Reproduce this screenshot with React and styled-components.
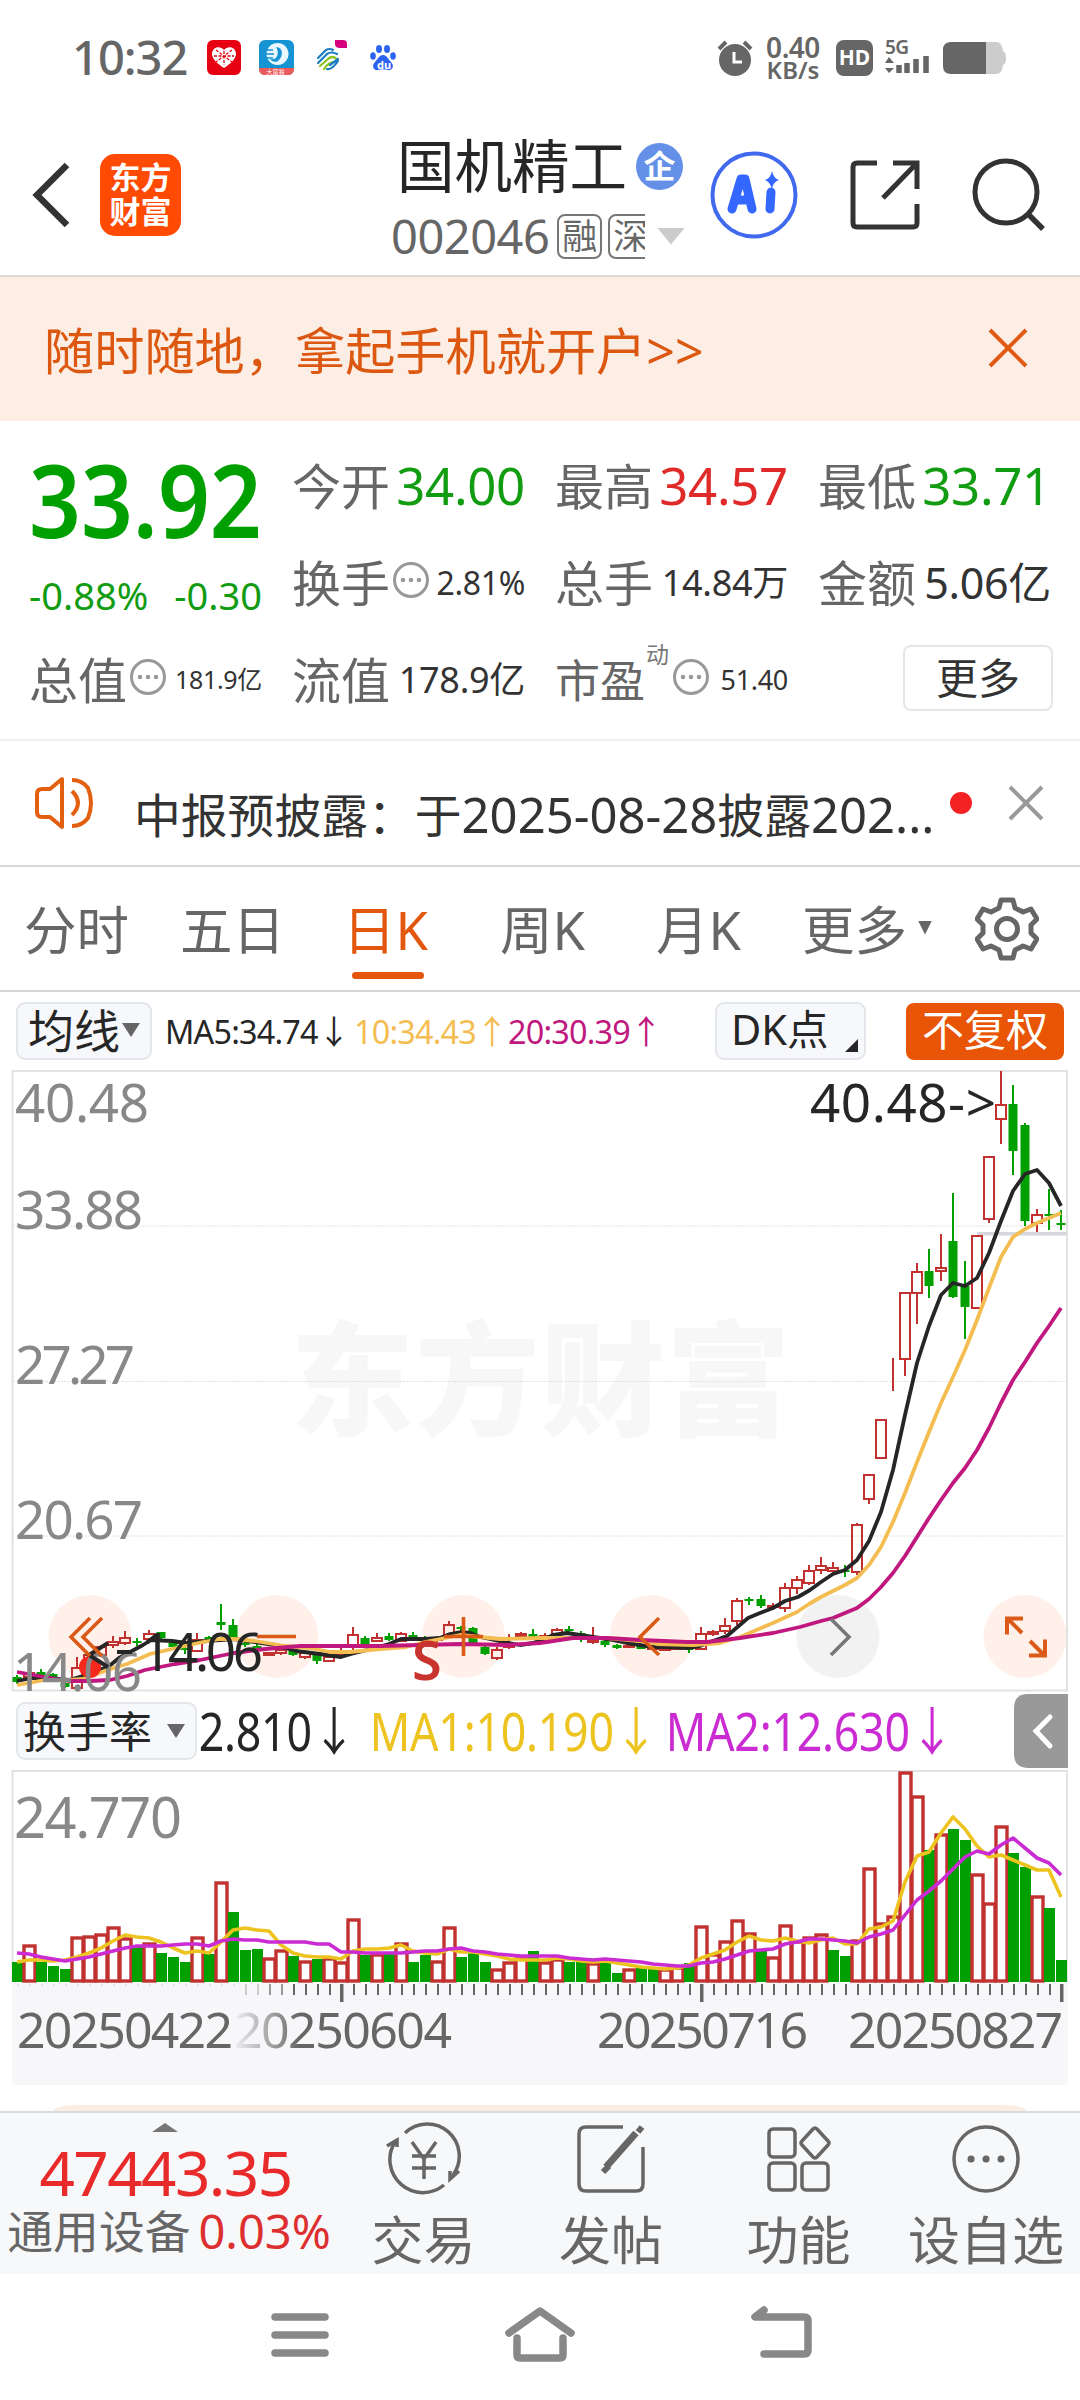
import styled, { createGlobalStyle, css } from "styled-components";

// ---------- data ----------

const up = "#c0312f";
const down = "#00a000";

// [rising, high, open/close top, open/close bottom, low], in chart pixels
const candles = [
  [0, 1675, 1677, 1682, 1684], [1, 1671, 1673, 1677, 1677], [0, 1669, 1672, 1675, 1676],
  [0, 1673, 1674, 1677, 1678], [0, 1680, 1683, 1687, 1688], [1, 1657, 1668, 1688, 1691],
  [1, 1654, 1655, 1662, 1664], [1, 1645, 1647, 1655, 1657], [1, 1636, 1642, 1645, 1648],
  [1, 1631, 1638, 1643, 1645], [0, 1638, 1641, 1643, 1646], [1, 1630, 1634, 1639, 1641],
  [0, 1632, 1632, 1638, 1639], [0, 1642, 1643, 1647, 1648], [0, 1644, 1648, 1650, 1654],
  [1, 1633, 1640, 1651, 1652], [0, 1636, 1637, 1641, 1642], [0, 1604, 1622, 1625, 1630],
  [0, 1619, 1625, 1638, 1639], [0, 1641, 1643, 1645, 1647], [0, 1643, 1646, 1649, 1652],
  [1, 1652, 1653, 1655, 1656], [1, 1647, 1650, 1653, 1655], [0, 1650, 1651, 1655, 1656],
  [1, 1651, 1653, 1657, 1659], [0, 1653, 1654, 1661, 1664], [1, 1654, 1657, 1661, 1662],
  [1, 1648, 1652, 1654, 1657], [1, 1627, 1635, 1645, 1655], [0, 1636, 1638, 1644, 1645],
  [1, 1633, 1638, 1641, 1642], [0, 1633, 1636, 1640, 1641], [1, 1632, 1634, 1641, 1642],
  [0, 1632, 1635, 1637, 1640], [0, 1636, 1638, 1640, 1641], [1, 1636, 1638, 1640, 1642],
  [1, 1621, 1625, 1635, 1636], [0, 1626, 1627, 1629, 1633], [0, 1627, 1628, 1643, 1644],
  [0, 1646, 1647, 1654, 1655], [1, 1647, 1650, 1658, 1660], [1, 1634, 1646, 1647, 1649],
  [1, 1632, 1634, 1636, 1637], [0, 1629, 1634, 1638, 1639], [1, 1633, 1636, 1637, 1638],
  [1, 1628, 1630, 1634, 1635], [0, 1626, 1629, 1631, 1635], [0, 1631, 1633, 1636, 1642],
  [1, 1627, 1641, 1642, 1644], [0, 1640, 1641, 1645, 1647], [0, 1644, 1645, 1648, 1649],
  [1, 1645, 1646, 1647, 1648], [0, 1645, 1646, 1649, 1649], [1, 1646, 1648, 1649, 1650],
  [1, 1647, 1649, 1650, 1651], [1, 1647, 1648, 1649, 1649], [0, 1647, 1648, 1650, 1653],
  [1, 1627, 1634, 1649, 1650], [1, 1630, 1632, 1634, 1636], [1, 1618, 1626, 1631, 1634],
  [1, 1598, 1601, 1621, 1625], [0, 1597, 1599, 1601, 1605], [0, 1595, 1599, 1606, 1608],
  [1, 1603, 1606, 1607, 1610], [1, 1583, 1588, 1608, 1612], [1, 1576, 1580, 1588, 1594],
  [1, 1565, 1571, 1583, 1585], [1, 1557, 1566, 1570, 1574], [1, 1562, 1568, 1571, 1573],
  [0, 1565, 1570, 1572, 1577], [1, 1523, 1525, 1572, 1575], [1, 1474, 1475, 1499, 1504],
  [1, 1419, 1420, 1458, 1459], [1, 1358, 1359, 1359, 1391], [1, 1292, 1293, 1359, 1376],
  [1, 1263, 1272, 1293, 1324], [0, 1249, 1271, 1286, 1298], [1, 1234, 1268, 1271, 1281],
  [0, 1193, 1241, 1297, 1298], [0, 1261, 1286, 1307, 1339], [1, 1235, 1236, 1308, 1309],
  [1, 1156, 1157, 1219, 1223], [1, 1071, 1105, 1119, 1144], [0, 1085, 1104, 1151, 1175],
  [0, 1123, 1125, 1221, 1226], [1, 1209, 1215, 1223, 1232], [0, 1189, 1214, 1216, 1230],
  [0, 1210, 1223, 1225, 1230],
];

const ma5 =
  "17,1681 32,1678 48,1678 69,1680 83,1676 95,1671 108,1667 119,1658 143,1645 151,1640 172,1641 186,1643 207,1641 234,1639 255,1642 275,1645 296,1651 320,1654 341,1657 351,1654 375,1648 389,1644 401,1639 425,1639 440,1638 450,1634 461,1632 470,1633 480,1637 490,1639 503,1642 520,1645 533,1643 547,1638 553,1635 567,1633 580,1635 593,1637 607,1639 627,1643 640,1645 653,1647 667,1647 687,1648 700,1646 713,1641 727,1636 748,1618 760,1613 773,1608 785,1601 798,1597 810,1590 821,1582 833,1574 845,1570 857,1560 869,1541 881,1512 893,1470 905,1415 917,1363 929,1326 941,1295 953,1283 965,1286 977,1278 989,1253 1001,1221 1013,1191 1025,1174 1037,1170 1049,1183 1061,1206";
const ma10 =
  "17,1685 45,1680 69,1680 83,1679 107,1670 127,1664 150,1654 176,1648 203,1642 220,1639 234,1639 255,1641 285,1646 310,1648 330,1652 350,1652 380,1649 406,1647 425,1642 440,1639 460,1635 480,1637 500,1639 540,1638 573,1638 607,1638 640,1641 657,1644 693,1645 720,1643 740,1637 773,1623 797,1612 809,1604 821,1597 833,1591 845,1585 857,1578 869,1565 881,1547 893,1522 905,1493 917,1462 929,1432 941,1403 953,1377 965,1350 977,1320 989,1288 1001,1257 1013,1237 1025,1229 1037,1223 1049,1218 1061,1213";
const ma20 =
  "17,1672 45,1677 69,1681 90,1681 110,1680 127,1676 145,1670 175,1664 200,1660 234,1653 265,1649 300,1646 330,1646 380,1646 420,1645 461,1644 507,1645 540,1643 573,1638 607,1638 640,1640 687,1642 707,1642 740,1638 773,1633 800,1627 821,1621 833,1618 845,1613 857,1608 869,1599 881,1587 893,1573 905,1556 917,1537 929,1518 941,1500 953,1483 965,1468 977,1450 989,1428 1001,1403 1013,1380 1025,1362 1037,1343 1049,1326 1061,1308";

// turnover bars: top edge; "r" rising, "g" falling
const bars =
  "g1962 r1945 g1962 g1966 g1969 r1937 r1936 r1934 r1927 r1938 g1947 r1943 g1953 g1957 g1962 r1937 g1954 r1882 g1912 g1950 g1949 r1958 r1950 g1956 r1961 g1959 r1958 r1962 r1919 g1955 r1954 g1952 r1943 g1962 g1955 r1961 r1927 g1957 g1952 g1962 r1969 r1962 r1958 g1951 r1962 r1959 g1962 g1959 r1963 g1962 g1973 r1969 g1968 g1968 r1969 r1967 g1963 r1926 r1954 r1941 r1920 r1933 g1951 r1957 r1925 r1941 r1937 r1934 g1950 g1956 r1940 r1868 r1923 r1916 r1772 r1796 g1850 r1834 g1829 g1840 r1874 r1903 r1826 g1853 g1867 r1896 g1908 g1960".split(" ");
const volMa1 = [
  1962, 1960, 1960, 1961, 1960, 1957, 1953, 1948, 1941, 1935, 1937, 1938, 1942, 1948, 1953, 1951, 1953, 1942, 1930,
  1928, 1930, 1931, 1945, 1953, 1956, 1957, 1957, 1959, 1951, 1949, 1949, 1948, 1945, 1951, 1953, 1954, 1949, 1952,
  1952, 1954, 1956, 1959, 1960, 1960, 1960, 1958, 1959, 1961, 1962, 1961, 1963, 1965, 1967, 1968, 1969, 1968, 1965,
  1958, 1954, 1950, 1942, 1936, 1940, 1941, 1938, 1941, 1943, 1940, 1938, 1944, 1944, 1929, 1927, 1921, 1882, 1856,
  1852, 1833, 1817, 1829, 1846, 1857, 1855, 1860, 1865, 1870, 1870, 1897,
];
const volMa2 = [
  1953, 1954, 1957, 1959, 1961, 1959, 1957, 1954, 1951, 1948, 1946, 1946, 1946, 1945, 1944, 1944, 1946, 1941, 1939,
  1940, 1940, 1942, 1942, 1942, 1942, 1944, 1944, 1952, 1952, 1953, 1953, 1953, 1953, 1952, 1951, 1951, 1949, 1948,
  1951, 1952, 1954, 1955, 1956, 1956, 1956, 1956, 1958, 1959, 1960, 1959, 1960, 1961, 1962, 1964, 1965, 1966, 1966,
  1963, 1962, 1959, 1955, 1951, 1950, 1949, 1944, 1942, 1939, 1939, 1940, 1941, 1943, 1937, 1934, 1930, 1915, 1900,
  1891, 1881, 1869, 1857, 1851, 1854, 1845, 1838, 1848, 1858, 1863, 1875,
];

const cx = (i) => 17 + i * 12;
const toPoints = (list) => list.map((y, i) => `${cx(i)},${y}`).join(" ");

// ---------- parts ----------

const Dots = () => (
  <DotsIcon viewBox="0 0 38 38">
    <circle cx="19" cy="19" r="16.5" fill="none" stroke="#999" strokeWidth="3" />
    <circle cx="11" cy="19" r="2.3" fill="#999" />
    <circle cx="19" cy="19" r="2.3" fill="#999" />
    <circle cx="27" cy="19" r="2.3" fill="#999" />
  </DotsIcon>
);

const Quote = ({ label, value, size = 51, color = "#333", info, sup }) => (
  <QuoteCell>
    <QuoteLabel $small={!!sup}>{label}</QuoteLabel>
    {sup && <Sup>{sup}</Sup>}
    {info && <Dots />}
    <QuoteValue $size={size} $color={color}>
      {value}
    </QuoteValue>
  </QuoteCell>
);

const Candle = ({ x, data }) => {
  const [rising, high, top, bottom, low] = data;
  const color = rising ? up : down;
  return (
    <g stroke={color} strokeWidth="2">
      <path d={`M${x} ${high}V${top}M${x} ${bottom}V${low}`} />
      {rising ? (
        <rect x={x - 5} y={top} width="10" height={bottom - top} fill="none" />
      ) : (
        <rect x={x - 4.5} y={top} width="9" height={bottom - top} fill={color} stroke="none" />
      )}
    </g>
  );
};

const StatusBar = () => (
  <Status>
    <Clock>10:32</Clock>
    <StatusIcons viewBox="0 0 200 44">
      <rect x="1" y="4" width="34" height="35" rx="6" fill="#e60012" />
      <path d="M18 32C12 28 6 23 6 18c0-7 8-9 12-4 4-5 12-3 12 4 0 5-6 10-12 14z" fill="#fff" />
      <path d="M10 14l16 12M26 14L10 26M18 15v14M8 20h20" stroke="#e60012" strokeWidth="1.3" strokeDasharray="3 1.5" />
      <rect x="53" y="4" width="35" height="35" rx="6" fill="#1593d2" />
      <path d="M53 32h35v1c0 4-3 6-6 6H59c-3 0-6-2-6-6z" fill="#ec5b5b" />
      <circle cx="71.500" cy="18" r="11" fill="#e9f6fd" />
      <path d="M70 11c7 0 8 9 2 14-3 2-7 0-8-2 7 2 10-6 6-12z" fill="#1593d2" />
      <path d="M58 14h9M58 18h10M59 22h8" stroke="#1593d2" strokeWidth="1.5" />
      <text x="60.500" y="37.500" fontSize="6" fill="#fff">大富翁</text>
      <g fill="none" strokeWidth="2.200" strokeLinecap="round">
        <path d="M112 22l8-8q4-2 7 0M112 27l9-9q4-3 10 0" stroke="#1c7cc4" />
        <path d="M114 30l8-7q4-4 9 0M118 33q5-8 13-7" stroke="#8cc320" />
        <path d="M121 33q5 1 11-8M124 29l8-6" stroke="#1c7cc4" />
      </g>
      <path d="M129 4h8q4 0 4 4v4h-7q-5 0-5-4z" fill="#d6007f" />
      <g fill="#2c63f0">
        <ellipse cx="167" cy="20" rx="2.800" ry="3.800" />
        <ellipse cx="173" cy="13" rx="3" ry="4" />
        <ellipse cx="181" cy="13" rx="3" ry="4" />
        <ellipse cx="187" cy="20" rx="2.800" ry="3.800" />
        <path d="M177 19c4 0 5 4 8 7 4 4 1 9-3 8-3-1-7-1-10 0-4 1-7-4-3-8 3-3 4-7 8-7z" />
      </g>
      <text x="171" y="33" fontSize="11" fontWeight="700" fill="#fff">du</text>
    </StatusIcons>
    <AlarmIcon viewBox="0 0 36 38">
      <circle cx="18" cy="21" r="16" fill="#666" />
      <path d="M2 10l7-7M34 10l-7-7" stroke="#666" strokeWidth="4" />
      <path d="M17 13v10h8" fill="none" stroke="#fff" strokeWidth="3" />
    </AlarmIcon>
    <Speed>
      <b>0.40</b>
      <small>KB/s</small>
    </Speed>
    <Hd>HD</Hd>
    <SignalIcon viewBox="0 0 46 36">
      <text x="0" y="14" fontSize="19" fontWeight="600" fill="#666" textLength="24">5G</text>
      <path d="M4 17l5 6H0zM4 33l5-5H0z" fill="#666" />
      <path d="M14 33v-8M22 33V23M31 33V19M41 33V16" stroke="#666" strokeWidth="5.500" />
    </SignalIcon>
    <BatteryIcon viewBox="0 0 64 34">
      <path d="M40 1h14q6 0 7 9 3 1 3 7t-3 7q-1 9-7 9H40z" fill="#ccc" />
      <path d="M9 1h35v32H9q-8 0-8-8V9q0-8 8-8z" fill="#666" />
    </BatteryIcon>
  </Status>
);

const TopBar = () => (
  <Header>
    <BackIcon viewBox="0 0 40 68">
      <path d="M35 4L5 34l30 30" fill="none" stroke="#333" strokeWidth="6.500" />
    </BackIcon>
    <Logo>
      东方
      <br />
      财富
    </Logo>
    <TitleBlock>
      <TitleRow>
        国机精工<Badge>企</Badge>
      </TitleRow>
      <CodeRow>
        <span>002046</span>
        <Tag>融</Tag>
        <TagClip>
          <Tag>深</Tag>
        </TagClip>
        <Triangle $w={28} $h={17} $color="#ccc" />
      </CodeRow>
    </TitleBlock>
    <AiIcon viewBox="0 0 88 88">
      <circle cx="44" cy="44" r="41.500" fill="none" stroke="#4169ee" strokeWidth="4" />
      <g fill="none" stroke="#3367ff" strokeWidth="9" strokeLinecap="round" strokeLinejoin="round">
        <path d="M22 58l9-30h4l7 30M26 49h13M61 41l-1 17" />
      </g>
      <path d="M62 20q2 8 7 9-6 2-7 9-2-7-7-9 6-2 7-9z" fill="#3367ff" />
    </AiIcon>
    <ShareIcon viewBox="0 0 72 72">
      <path d="M28 4H8q-4 0-4 4v56q0 4 4 4h56q4 0 4-4V45M44 4h24v26M67 5L34 39" fill="none" stroke="#333" strokeWidth="5" />
    </ShareIcon>
    <SearchIcon viewBox="0 0 74 74">
      <circle cx="34" cy="34" r="31" fill="none" stroke="#333" strokeWidth="5" />
      <path d="M56 56l15 15" stroke="#333" strokeWidth="5.500" />
    </SearchIcon>
  </Header>
);

const PriceChart = () => (
  <ChartSvg viewBox="0 1070 1080 622" $height={622}>
    <text x="290" y="1426" fontSize="124" fontWeight="900" fill="#f7f7f7" textLength="500">
      东方财富
    </text>
    <g fill="none" stroke="#e2e2e2" strokeWidth="2">
      <rect x="12.500" y="1071" width="1054.500" height="619.500" />
      <path d="M13 1226H1067M13 1381.500H1067M13 1536H1067" strokeWidth="1" strokeDasharray="2 1" />
    </g>
    {[90, 277, 463.5, 651, 838, 1025].map((x) => (
      <circle key={x} cx={x} cy="1636.500" r="41.500" fill={x === 838 ? "#f2f2f2" : "#fff1ea"} />
    ))}
    <rect x="977" y="1232" width="90" height="3.500" fill="#d5d7dd" />
    {candles.map((c, i) => (
      <Candle key={i} x={cx(i)} data={c} />
    ))}
    <g fill="none" strokeWidth="3.800" strokeLinejoin="round">
      <polyline points={ma5} stroke="#262626" />
      <polyline points={ma10} stroke="#f3bd52" />
      <polyline points={ma20} stroke="#c0187e" />
    </g>
    <g fill="#888" fontSize="53">
      <text x="15" y="1122" textLength="134">40.48</text>
      <text x="15" y="1229" textLength="128">33.88</text>
      <text x="15" y="1384" textLength="120">27.27</text>
      <text x="15" y="1539" textLength="128">20.67</text>
    </g>
    <circle cx="90" cy="1667" r="11" fill="#f5281e" />
    <text x="13" y="1691" fontSize="53" fill="#888" textLength="129">14.06</text>
    <g fill="#262626" fontSize="53">
      <text x="810" y="1121.500" textLength="186">40.48-&gt;</text>
      <text x="141" y="1671" textLength="122">14.06</text>
    </g>
    <path d="M108 1643L89 1655l19 12M117 1652h15" fill="none" stroke="#262626" strokeWidth="4" />
    <text x="412" y="1680" fontSize="54" fontWeight="600" fill="#c9332e">S</text>
    <g fill="none" stroke="#dc5a18" strokeWidth="3.600">
      <path d="M90 1618l-19 19 19 19M102 1618l-19 19 19 19" />
      <path d="M257 1636.500h39M444 1636.500h39M463.500 1617v39" />
      <path d="M659 1618l-19 19 19 18" />
      <path d="M831 1619l18 18-18 18" stroke="#777" />
      <path d="M1023 1618.500h-16v16M1008 1619l14 14M1029 1655.500h16v-16M1044 1655l-14-14" strokeWidth="4" />
    </g>
  </ChartSvg>
);

const TurnoverChart = () => (
  <ChartSvg viewBox="0 1770 1080 213" $height={213}>
    <path d="M12.500 1982V1771H1067V1982" fill="none" stroke="#e2e2e2" strokeWidth="2" />
    <text x="14" y="1838" fontSize="56" fill="#888" textLength="168">24.770</text>
    {bars.map((b, i) => {
      const top = Number(b.slice(1));
      return b[0] === "r" ? (
        <rect key={i} x={cx(i) - 5} y={top + 1} width="11" height={1980 - top} fill="#fff" stroke={up} strokeWidth="3.400" />
      ) : (
        <rect key={i} x={cx(i) - 5} y={top} width="11" height={1982 - top} fill={down} />
      );
    })}
    <g fill="none" strokeWidth="3.600" strokeLinejoin="round">
      <polyline points={toPoints(volMa1)} stroke="#edc31f" />
      <polyline points={toPoints(volMa2)} stroke="#cb2bd3" />
    </g>
  </ChartSvg>
);

const tickColor = (i) => (i < 19 ? "#e4e4e6" : i < 21 ? "#ccc" : i < 23 ? "#999" : "#666");

const DateAxis = () => (
  <Axis viewBox="12 1983 1056 102">
    <defs>
      <linearGradient id="fade" gradientUnits="userSpaceOnUse" x1="236" x2="300" y1="0" y2="0">
        <stop offset="0" stopColor="#666" stopOpacity="0.080" />
        <stop offset="1" stopColor="#666" />
      </linearGradient>
    </defs>
    {bars.map((b, i) => {
      const major = i === 27 || i === 57 || i === 87;
      const h = i < 19 ? 2 : major ? 18 : 11;
      return <rect key={i} x={cx(i) - (major ? 1 : 0)} y="1984" width={major ? 3.5 : 2} height={h} fill={tickColor(i)} />;
    })}
    <g fontSize="50" fill="#666">
      <text x="17" y="2048" textLength="216">20250422</text>
      <text x="234" y="2048" textLength="218" fill="url(#fade)">20250604</text>
      <text x="597" y="2048" textLength="211">20250716</text>
      <text x="848" y="2048" textLength="215">20250827</text>
    </g>
  </Axis>
);

const BottomBar = () => (
  <Bottom>
    <IndexBlock>
      <UpMark />
      <IndexValue>47443.35</IndexValue>
      <IndexName>
        通用设备 <em>0.03%</em>
      </IndexName>
    </IndexBlock>
    <Action>
      <svg viewBox="0 0 76 76">
        <path d="M19 12a32 32 0 0 1 48 42M9 21A33 33 0 0 0 58 64" />
        <path d="M1 25l10-6v7M73 50l-9 8 0-8M26 21l12 17 12-17M26 35h24M26 47h24M38 37v21" />
      </svg>
      交易
    </Action>
    <Action>
      <svg viewBox="0 0 76 76">
        <path d="M50 6H13q-7 0-7 7v50q0 7 7 7h50q7 0 7-7V26" />
        <path d="M63 12L33 46" strokeWidth="7" />
        <path d="M30 51l6-6M65 11l4-5" strokeWidth="6" />
      </svg>
      发帖
    </Action>
    <Action>
      <svg viewBox="0 0 76 76">
        <rect x="8" y="8" width="26" height="28" rx="4" />
        <rect x="8" y="42" width="26" height="27" rx="4" />
        <rect x="41" y="42" width="26" height="27" rx="4" />
        <path d="M52 8q2-2 4 0l11 12q2 2 0 4L56 36q-2 2-4 0L41 24q-2-2 0-4z" />
      </svg>
      功能
    </Action>
    <Action>
      <svg viewBox="0 0 76 76">
        <circle cx="38" cy="38" r="32" />
        <path d="M23 38h.1M38 38h.1M53 38h.1" strokeWidth="7" strokeLinecap="round" />
      </svg>
      设自选
    </Action>
  </Bottom>
);

export default function App() {
  return (
    <Phone>
      <GlobalStyle />
      <StatusBar />
      <TopBar />
      <Banner>
        <span>随时随地，拿起手机就开户&gt;&gt;</span>
        <CloseIcon viewBox="0 0 40 40" $size={40} $color="#e05a14">
          <path d="M2 2l36 36M38 2L2 38" />
        </CloseIcon>
      </Banner>
      <Quotes>
        <PriceCell>
          <Price>33.92</Price>
          <Change>
            <span>-0.88%</span>
            <span>-0.30</span>
          </Change>
        </PriceCell>
        <Quote label="今开" value="34.00" color="#129c12" />
        <Quote label="最高" value="34.57" color="#e02a2a" />
        <Quote label="最低" value="33.71" color="#129c12" />
        <Quote label="换手" value="2.81%" size={32} info />
        <Quote label="总手" value="14.84万" size={36} />
        <Quote label="金额" value="5.06亿" size={43} />
        <Quote label="总值" value="181.9亿" size={25} info />
        <Quote label="流值" value="178.9亿" size={36} />
        <Quote label="市盈" value="51.40" size={27} sup="动" info />
        <MoreButton>更多</MoreButton>
      </Quotes>
      <Notice>
        <SpeakerIcon viewBox="0 0 64 54">
          <path d="M28 3v48L16 41H8q-5 0-5-5V18q0-5 5-5h8z" />
          <path d="M38 15q12 12 0 24M38 4q10 0 16 8 6 15 0 30-6 8-16 8" />
        </SpeakerIcon>
        <NoticeText>
          中报预披露：于<Latin>2025-08-28</Latin>披露<Latin>202...</Latin>
        </NoticeText>
        <RedDot />
        <CloseIcon viewBox="0 0 36 36" $size={36} $color="#999">
          <path d="M2 2l32 32M34 2L2 34" />
        </CloseIcon>
      </Notice>
      <Tabs>
        <Tab>分时</Tab>
        <Tab>五日</Tab>
        <Tab $active>日K</Tab>
        <Tab>周K</Tab>
        <Tab>月K</Tab>
        <Tab>
          更多
          <Triangle $w={14} $h={14} $color="#666" />
        </Tab>
        <GearIcon viewBox="0 0 64 64">
          <path d="M26 3h12l2 8 8 4 8-3 6 10-6 6v8l6 6-6 10-8-3-8 4-2 8H26l-2-8-8-4-8 3-6-10 6-6v-8l-6-6 6-10 8 3 8-4z" />
          <circle cx="32" cy="32" r="10.500" />
        </GearIcon>
      </Tabs>
      <MaBar>
        <Chip $width={136}>
          均线
          <Triangle $w={18} $h={14} $color="#666" />
        </Chip>
        <MaValues>
          <Ma $color="#262626" $width={189}>MA5:34.74↓</Ma>
          <Ma $color="#f3bd52" $width={154}>10:34.43↑</Ma>
          <Ma $color="#c0187e" $width={150}>20:30.39↑</Ma>
        </MaValues>
        <Chip $width={151} $center>
          DK点
          <Corner />
        </Chip>
        <RightsButton>不复权</RightsButton>
      </MaBar>
      <PriceChart />
      <TurnoverBar>
        <Chip $width={181} $small>
          换手率
          <Triangle $w={18} $h={14} $color="#666" />
        </Chip>
        <Turnover $color="#262626" $width={171}>2.810↓</Turnover>
        <Turnover $color="#edc31f" $width={296}>MA1:10.190↓</Turnover>
        <Turnover $color="#cb2bd3" $width={290}>MA2:12.630↓</Turnover>
        <Drawer viewBox="0 0 54 74">
          <path d="M54 0H14Q0 0 0 14v46q0 14 14 14h40z" fill="#999" />
          <path d="M36 23L22 37l14 15" fill="none" stroke="#fff" strokeWidth="5" strokeLinecap="round" />
        </Drawer>
      </TurnoverBar>
      <TurnoverChart />
      <DateAxis />
      <CardPeek />
      <BottomBar />
      <NavBar>
        <svg viewBox="0 0 60 60">
          <path d="M5 11h50M5 29h50M5 47h50" />
        </svg>
        <svg viewBox="0 0 76 60">
          <path d="M7 27L38 5l31 22M15 32v17q0 3 3 3h40q3 0 3-3V32" />
        </svg>
        <svg viewBox="0 0 66 60">
          <path d="M15 4L6 11h49q4 0 4 4v29q0 4-4 4H15" />
        </svg>
      </NavBar>
    </Phone>
  );
}

// ---------- styles ----------

const GlobalStyle = createGlobalStyle`
  * { box-sizing: border-box; }
  body {
    margin: 0;
    background: #fff;
    font-family: "Noto Sans", "Noto Sans CJK SC", sans-serif;
  }
`;

const Phone = styled.div`
  width: 1080px;
  height: 2400px;
  overflow: hidden;
  display: flex;
  flex-direction: column;
  background: #fff;
  line-height: 1;
  white-space: nowrap;

  > * {
    flex-shrink: 0;
  }
`;

const Status = styled.div`
  height: 115px;
  padding: 0 74px 0 72px;
  display: flex;
  align-items: center;
`;

const Clock = styled.span`
  width: 134px;
  font-size: 47px;
  font-weight: 500;
  letter-spacing: -1px;
  color: #666;
`;

const StatusIcons = styled.svg`
  width: 200px;
  height: 44px;
  margin-right: auto;
`;

const AlarmIcon = styled.svg`
  width: 36px;
  height: 38px;
`;

const Speed = styled.div`
  width: 60px;
  margin: 0 13px 0 10px;
  display: flex;
  flex-direction: column;
  align-items: center;
  font-size: 28px;
  line-height: 24px;
  color: #666;

  b {
    font-weight: 600;
    letter-spacing: -0.5px;
  }
  small {
    font-size: 24px;
    font-weight: 600;
    line-height: 22px;
  }
`;

const Hd = styled.span`
  width: 37px;
  height: 36px;
  margin-right: 12px;
  border-radius: 8px;
  background: #666;
  color: #fff;
  font-size: 21px;
  font-weight: 700;
  line-height: 35px;
  text-align: center;
`;

const SignalIcon = styled.svg`
  width: 46px;
  height: 36px;
  margin-right: 11px;
`;

const BatteryIcon = styled.svg`
  width: 64px;
  height: 34px;
`;

const Header = styled.div`
  height: 162px;
  padding: 0 34px 0 32px;
  display: flex;
  align-items: center;
  border-bottom: 2px solid #dcd8d5;
`;

const BackIcon = styled.svg`
  width: 40px;
  height: 68px;
  margin-right: 28px;
`;

const Logo = styled.div`
  width: 81px;
  height: 82px;
  padding-top: 6px;
  border-radius: 15px;
  background: #fe4a02;
  color: #fff;
  font-size: 31px;
  font-weight: 700;
  line-height: 34px;
  text-align: center;
`;

const TitleBlock = styled.div`
  width: 300px;
  margin: 16px 23px 0 206px;
`;

const TitleRow = styled.div`
  display: flex;
  align-items: center;
  padding-left: 10px;
  font-size: 57.500px;
  line-height: 66px;
  color: #262626;
`;

const Badge = styled.span`
  width: 47px;
  height: 47px;
  margin-left: 9px;
  border-radius: 50%;
  background: #6590e8;
  color: #fff;
  font-size: 32px;
  font-weight: 700;
  line-height: 45px;
  text-align: center;
`;

const CodeRow = styled.div`
  height: 74px;
  display: flex;
  align-items: center;
  padding-left: 4px;
  font-size: 47px;
  letter-spacing: -0.5px;
  color: #666;

  span:first-child {
    width: 166px;
  }
`;

const Tag = styled.i`
  display: block;
  flex: none;
  width: 45px;
  height: 45px;
  border: 2px solid #777;
  border-radius: 8px;
  font-size: 35px;
  font-style: normal;
  line-height: 39px;
  text-align: center;
`;

const TagClip = styled.div`
  width: 37px;
  margin: 0 12px 0 6px;
  overflow: hidden;
`;

const Triangle = styled.span`
  width: ${(p) => p.$w}px;
  height: ${(p) => p.$h}px;
  background: ${(p) => p.$color};
  clip-path: polygon(0 0, 100% 0, 50% 100%);
`;

const AiIcon = styled.svg`
  width: 88px;
  height: 88px;
  margin-right: 51px;
`;

const ShareIcon = styled.svg`
  width: 72px;
  height: 72px;
  margin-right: auto;
`;

const SearchIcon = styled.svg`
  width: 74px;
  height: 74px;
`;

const Banner = styled.div`
  height: 144px;
  padding: 4px 52px 0 44px;
  display: flex;
  align-items: center;
  justify-content: space-between;
  background: #fcede5;
  color: #dc5810;
  font-size: 50.200px;

  svg {
    margin-top: -6px;
  }
`;

const CloseIcon = styled.svg`
  width: ${(p) => p.$size}px;
  height: ${(p) => p.$size}px;
  fill: none;
  stroke: ${(p) => p.$color};
  stroke-width: 4;
`;

const Quotes = styled.div`
  height: 320px;
  padding: 17px 29px 0 29px;
  display: grid;
  grid-template-columns: repeat(4, 233px);
  grid-template-rows: repeat(3, 97px);
  column-gap: 30px;
  border-bottom: 2px solid #eee;
`;

const PriceCell = styled.div`
  grid-row: span 2;
`;

const Price = styled.div`
  margin-top: 5px;
  font-size: 102px;
  font-weight: 600;
  line-height: 112px;
  color: #00a000;
  transform: scaleX(0.89);
  transform-origin: left;
`;

const Change = styled.div`
  margin-top: 18px;
  display: flex;
  justify-content: space-between;
  font-size: 38px;
  line-height: 44px;
  color: #129c12;
`;

const QuoteCell = styled.div`
  display: flex;
  align-items: center;
`;

const QuoteLabel = styled.span`
  font-size: ${(p) => (p.$small ? 45 : 49)}px;
  color: #666;
`;

const QuoteValue = styled.span`
  margin-left: auto;
  padding-bottom: 2px;
  font-size: ${(p) => p.$size}px;
  letter-spacing: -0.3px;
  color: ${(p) => p.$color};
`;

const Sup = styled.sup`
  width: 25px;
  height: 76px;
  padding-left: 1px;
  font-size: 23px;
  color: #777;
`;

const DotsIcon = styled.svg`
  width: 38px;
  height: 38px;
  margin: -8px 0 0 2px;
`;

const MoreButton = styled.div`
  align-self: center;
  justify-self: end;
  width: 150px;
  height: 66px;
  margin: -6px -2px 0 0;
  border: 2px solid #e6e6e6;
  border-radius: 8px;
  font-size: 42px;
  line-height: 61px;
  text-align: center;
  color: #333;
`;

const Notice = styled.div`
  height: 126px;
  padding: 0 36px 0 34px;
  display: flex;
  align-items: center;
  border-bottom: 2px solid #d6d6d6;
`;

const SpeakerIcon = styled.svg`
  width: 64px;
  height: 54px;
  margin-right: 36px;
  fill: none;
  stroke: #e2600f;
  stroke-width: 4;
  stroke-linejoin: round;
`;

const NoticeText = styled.div`
  width: 816px;
  padding-top: 23px;
  font-size: 46.800px;
  color: #333;
`;

const Latin = styled.span`
  font-size: 49px;
`;

const RedDot = styled.i`
  width: 22px;
  height: 22px;
  margin-right: auto;
  border-radius: 50%;
  background: #f42222;
`;

const Tabs = styled.div`
  height: 125px;
  padding-left: 24px;
  display: grid;
  grid-template-columns: 156px 163px 157px 156px 146px 173px 64px;
  align-items: center;
  border-bottom: 2px solid #d6d6d6;
`;

const Tab = styled.div`
  position: relative;
  display: flex;
  align-items: center;
  padding-top: 4px;
  font-size: 52.500px;
  color: #666;

  span {
    margin: -6px 0 0 11px;
  }

  ${(p) =>
    p.$active &&
    css`
      color: #e2570d;

      &::after {
        content: "";
        position: absolute;
        left: 9px;
        top: 72px;
        width: 72px;
        height: 7px;
        border-radius: 4px;
        background: #e6560c;
      }
    `}
`;

const GearIcon = styled.svg`
  width: 64px;
  height: 64px;
  fill: none;
  stroke: #666;
  stroke-width: 5;
  stroke-linejoin: round;
`;

const MaBar = styled.div`
  height: 78px;
  padding: 0 16px;
  display: flex;
  align-items: center;
`;

const Chip = styled.div`
  position: relative;
  width: ${(p) => p.$width}px;
  height: 58px;
  padding: 0 10px ${(p) => (p.$small ? 0 : 2)}px ${(p) => (p.$small ? 5 : 10)}px;
  display: flex;
  align-items: center;
  justify-content: space-between;
  border: 2px solid #e3e6ea;
  border-radius: 9px;
  background: #f7f8fb;
  font-size: ${(p) => (p.$small ? 43 : p.$center ? 41.5 : 46)}px;
  color: #262626;
  ${(p) => p.$center && "padding-left: 14px;"}
`;

const Corner = styled.i`
  position: absolute;
  right: 6px;
  bottom: 6px;
  width: 13px;
  height: 13px;
  background: #262626;
  clip-path: polygon(100% 0, 100% 100%, 0 100%);
`;

const MaValues = styled.div`
  width: 563px;
  padding-left: 13px;
  display: flex;
`;

const Ma = styled.span`
  width: ${(p) => p.$width}px;
  font-size: 33px;
  letter-spacing: -0.8px;
  color: ${(p) => p.$color};
  transform: scaleX(0.98);
  transform-origin: left;
`;

const RightsButton = styled.div`
  width: 158px;
  height: 57px;
  margin-left: auto;
  border-radius: 8px;
  background: #e95506;
  color: #fff;
  font-size: 42px;
  line-height: 53px;
  text-align: center;
`;

const ChartSvg = styled.svg`
  display: block;
  width: 1080px;
  height: ${(p) => p.$height}px;
`;

const TurnoverBar = styled.div`
  height: 78px;
  padding: 0 12px 0 16px;
  display: flex;
  align-items: center;
`;

const Turnover = styled.span`
  width: ${(p) => p.$width}px;
  padding-left: 2px;
  font-size: 52px;
  letter-spacing: -0.3px;
  color: ${(p) => p.$color};
  transform: scaleX(0.86);
  transform-origin: left;
`;

const Drawer = styled.svg`
  width: 54px;
  height: 74px;
  margin-left: auto;
`;

const Axis = styled.svg`
  display: block;
  width: 1056px;
  height: 102px;
  margin-left: 12px;
  background: #f7f7fa;
`;

const CardPeek = styled.div`
  height: 6px;
  margin: 20px 53px 0;
  border-radius: 24px 24px 0 0 / 6px 6px 0 0;
  background: #fbece4;
`;

const Bottom = styled.div`
  height: 163px;
  display: grid;
  grid-template-columns: 330px 187px 188px 187px 188px;
  border-top: 2px solid #d9dadc;
  background: #f7f8fa;
`;

const IndexBlock = styled.div`
  display: flex;
  flex-direction: column;
  align-items: center;
`;

const UpMark = styled.i`
  width: 26px;
  height: 9px;
  margin-top: 10px;
  background: #777;
  clip-path: polygon(50% 0, 100% 100%, 0 100%);
`;

const IndexValue = styled.div`
  margin: 9px 0 0 1px;
  font-size: 62px;
  letter-spacing: -1.6px;
  color: #e82a2a;
`;

const IndexName = styled.div`
  margin: 3px 0 0 8px;
  font-size: 45.800px;
  line-height: 50px;
  color: #666;

  em {
    margin-left: -4px;
    font-style: normal;
    font-size: 47px;
    color: #dd2f2f;
  }
`;

const Action = styled.div`
  padding-top: 8px;
  display: flex;
  flex-direction: column;
  align-items: center;
  font-size: 52px;
  line-height: 56px;
  color: #666;

  svg {
    flex: none;
    width: 76px;
    height: 76px;
    margin-bottom: 15px;
    fill: none;
    stroke: #666;
    stroke-width: 3.5;
  }
`;

const NavBar = styled.div`
  height: 126px;
  padding: 32px 0 0 270px;
  display: flex;

  svg {
    height: 60px;
    fill: none;
    stroke: #888;
    stroke-width: 7.5;
    stroke-linecap: round;
    stroke-linejoin: round;
  }
  svg:nth-child(1) {
    width: 60px;
  }
  svg:nth-child(2) {
    width: 76px;
    margin: 0 171px 0 172px;
  }
  svg:nth-child(3) {
    width: 66px;
  }
`;
